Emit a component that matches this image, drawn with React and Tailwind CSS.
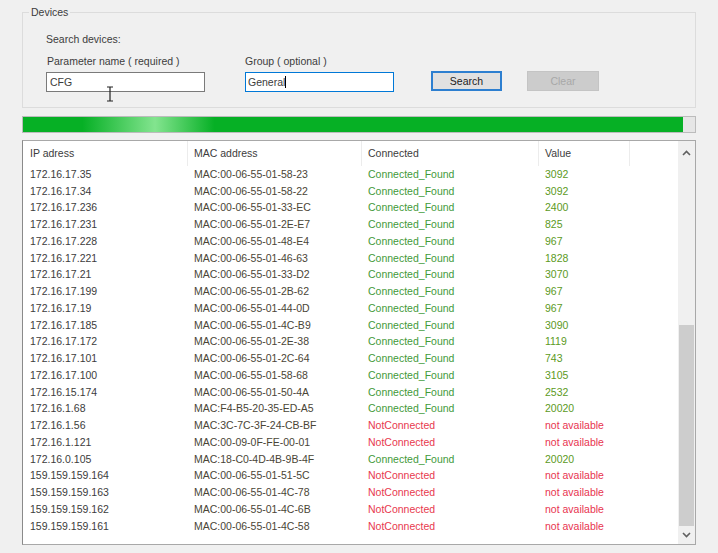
import React from 'react';

// device rows as shown in the list view
const rows = [
  ['172.16.17.35', 'MAC:00-06-55-01-58-23', true, '3092'],
  ['172.16.17.34', 'MAC:00-06-55-01-58-22', true, '3092'],
  ['172.16.17.236', 'MAC:00-06-55-01-33-EC', true, '2400'],
  ['172.16.17.231', 'MAC:00-06-55-01-2E-E7', true, '825'],
  ['172.16.17.228', 'MAC:00-06-55-01-48-E4', true, '967'],
  ['172.16.17.221', 'MAC:00-06-55-01-46-63', true, '1828'],
  ['172.16.17.21', 'MAC:00-06-55-01-33-D2', true, '3070'],
  ['172.16.17.199', 'MAC:00-06-55-01-2B-62', true, '967'],
  ['172.16.17.19', 'MAC:00-06-55-01-44-0D', true, '967'],
  ['172.16.17.185', 'MAC:00-06-55-01-4C-B9', true, '3090'],
  ['172.16.17.172', 'MAC:00-06-55-01-2E-38', true, '1119'],
  ['172.16.17.101', 'MAC:00-06-55-01-2C-64', true, '743'],
  ['172.16.17.100', 'MAC:00-06-55-01-58-68', true, '3105'],
  ['172.16.15.174', 'MAC:00-06-55-01-50-4A', true, '2532'],
  ['172.16.1.68', 'MAC:F4-B5-20-35-ED-A5', true, '20020'],
  ['172.16.1.56', 'MAC:3C-7C-3F-24-CB-BF', false, 'not available'],
  ['172.16.1.121', 'MAC:00-09-0F-FE-00-01', false, 'not available'],
  ['172.16.0.105', 'MAC:18-C0-4D-4B-9B-4F', true, '20020'],
  ['159.159.159.164', 'MAC:00-06-55-01-51-5C', false, 'not available'],
  ['159.159.159.163', 'MAC:00-06-55-01-4C-78', false, 'not available'],
  ['159.159.159.162', 'MAC:00-06-55-01-4C-6B', false, 'not available'],
  ['159.159.159.161', 'MAC:00-06-55-01-4C-58', false, 'not available'],
];

const Chevron = ({ up }) => (
  <svg width="9" height="6" viewBox="0 0 9 6">
    <path
      d={up ? 'M1 5 L4.5 1.5 L8 5' : 'M1 1 L4.5 4.5 L8 1'}
      fill="none"
      stroke="#606060"
      strokeWidth="1.6"
    />
  </svg>
);

const App = () => {
  return (
    <div className="w-[718px] h-[553px] bg-[#f0f0f0] px-[22px] pt-[6px] text-[10.5px] leading-[13px] text-[#3c3c3c] font-['Liberation_Sans',Arial,sans-serif] overflow-hidden">
      <fieldset className="border border-[#dcdcdc] pl-[6px] pb-[15px]">
        <legend className="px-[2px] leading-[13px] text-[#3c3c3c]">Devices</legend>
        <div className="pl-[17px]">
          <div className="mt-[14px]">Search devices:</div>
          <div className="flex items-end mt-[9px]">
            <div className="flex flex-col w-[159px]">
              <span className="ml-[1px]">Parameter name ( required )</span>
              <div className="relative mt-[4px] h-[20px] border border-[#7a7a7a] bg-white pl-[3px] flex items-center">
                CFG
                {/* mouse I-beam cursor */}
                <svg className="absolute left-[59px] top-[13px]" width="8" height="16" viewBox="0 0 8 16">
                  <path d="M1 1 H7 M4 1 V15 M1 15 H7" stroke="#222" strokeWidth="1.2" fill="none" />
                </svg>
              </div>
            </div>
            <div className="flex flex-col w-[149px] ml-[40px]">
              <span>Group ( optional )</span>
              <div className="mt-[4px] h-[20px] border border-[#0078d7] bg-white pl-[2px] flex items-center">
                General<span className="inline-block w-px h-[12px] bg-black" />
              </div>
            </div>
            <button className="ml-[37px] mb-[1px] w-[71px] h-[20px] bg-[#e1e1e1] border-2 border-[#2d7fd0] text-[#222] leading-none">
              Search
            </button>
            <button className="ml-[25px] mb-[1px] w-[72px] h-[20px] bg-[#cccccc] border border-[#c4c4c4] text-[#a8a8a8] leading-none">
              Clear
            </button>
          </div>
        </div>
      </fieldset>

      <div className="mt-[8px] h-[17px] border border-[#bcbcbc] bg-[#e6e6e6] flex">
        <div className="w-[660px] h-full bg-[linear-gradient(90deg,#06b025_0%,#06b025_9%,#83e48f_20%,#06b025_29%,#06b025_100%)]" />
      </div>

      <div className="mt-[7px] h-[405px] border border-[#a8a8a8] border-l-[#8a8a8a] bg-white flex">
        <div className="flex-1 flex flex-col">
          <div className="flex h-[25px] items-center text-[#3c3c3c]">
            <div className="w-[165px] pl-[7px] h-full flex items-center border-r border-[#ececec]">IP adress</div>
            <div className="w-[174px] pl-[6px] h-full flex items-center border-r border-[#ececec]">MAC address</div>
            <div className="w-[177px] pl-[6px] h-full flex items-center border-r border-[#ececec]">Connected</div>
            <div className="w-[91px] pl-[6px] h-full flex items-center border-r border-[#ececec]">Value</div>
          </div>
          {rows.map(([ip, mac, ok, val]) => (
            <div key={ip} className="flex h-[16.76px] items-center">
              <div className="w-[165px] pl-[7px]">{ip}</div>
              <div className="w-[174px] pl-[6px] text-[#4a4536]">{mac}</div>
              <div className={ok ? 'w-[177px] pl-[6px] text-[#3f9a3a]' : 'w-[177px] pl-[6px] text-[#e8384e]'}>
                {ok ? 'Connected_Found' : 'NotConnected'}
              </div>
              <div className={ok ? 'w-[91px] pl-[6px] text-[#5c9a24]' : 'w-[91px] pl-[6px] text-[#e8344f]'}>{val}</div>
            </div>
          ))}
        </div>
        <div className="w-[17px] bg-[#f0f0f0] flex flex-col">
          <div className="h-[23px] flex items-center justify-center">
            <Chevron up />
          </div>
          <div className="h-[161px]" />
          <div className="flex-1 mx-[1px] bg-[#cdcdcd]" />
          <div className="h-[18px] flex items-center justify-center">
            <Chevron />
          </div>
        </div>
      </div>
    </div>
  );
};

export default App;
